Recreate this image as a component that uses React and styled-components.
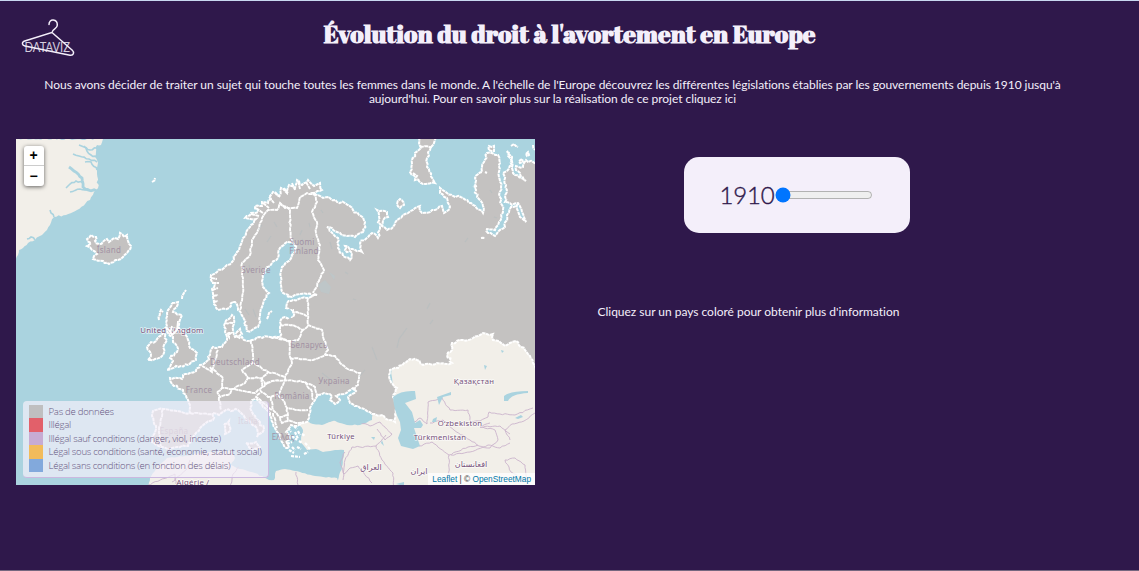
import React from "react";
import styled, { createGlobalStyle } from "styled-components";

const Global = createGlobalStyle`
  * { box-sizing: border-box; }
  body { margin: 0; background: #2f184b; font-family: Lato, "Liberation Sans", sans-serif; color: #f4effa; }
`;

const Page = styled.div`
  height: 571px;
  overflow: hidden;
  background: #2f184b;
  border-top: 1px solid #c8d8f0;
  border-bottom: 1px solid #75677f;
`;
const Header = styled.header`
  display: grid;
  grid-template-columns: 80px 1fr 80px;
  height: 64px;
`;
const Logo = styled.svg`
  width: 56px;
  height: 40px;
  margin: 17px 0 0 20px;
`;
const Title = styled.h1`
  margin: 16px 0 0;
  font: 700 24.8px/34px "Abril Fatface", "Liberation Serif", serif;
  text-align: center;
  white-space: nowrap;
`;
const Intro = styled.p`
  margin: 13px 34px 0 0;
  padding-top: 0;
  font-size: 12px;
  letter-spacing: -0.052px;
  line-height: 14.4px;
  text-align: center;
`;
const Main = styled.main`
  display: flex;
  margin: 32px 0 0 16px;
`;
const MapFrame = styled.section`
  position: relative;
  width: 519px;
  height: 346px;
  overflow: hidden;
  background: #aad3df;
`;
const MapSvg = styled.svg`
  display: block;
  width: 519px;
  height: 346px;
`;
const Zoom = styled.div`
  position: absolute;
  left: 7.5px;
  top: 7.5px;
  width: 20px;
  border-radius: 3px;
  background: #fff;
  box-shadow: 0 1px 4px rgba(0, 0, 0, 0.6);
`;
const ZoomButton = styled.button`
  display: block;
  width: 20px;
  height: 20px;
  padding: 0;
  border: 0;
  border-bottom: ${(p) => (p.$line ? "1px solid #ccc" : "0")};
  background: none;
  color: #000;
  font: 700 14px/19px "Liberation Sans", sans-serif;
`;
const Legend = styled.ul`
  position: absolute;
  left: 7px;
  top: 262px;
  width: 246px;
  height: 77px;
  margin: 0;
  padding: 4px 6px;
  list-style: none;
  border-radius: 4px;
  background: rgba(244, 239, 250, 0.7);
  border-right: 1px solid #cbb8e0;
  border-bottom: 1px solid #cbb8e0;
`;
const LegendRow = styled.li`
  display: flex;
  align-items: center;
  gap: 6px;
  height: 13.5px;
  font: 300 9.6px/13.5px "Open Sans", "Noto Sans", sans-serif;
  letter-spacing: -0.26px;
  color: #66557f;
  white-space: nowrap;
`;
const Swatch = styled.span`
  flex: none;
  width: 13.5px;
  height: 13.5px;
  background: ${(p) => p.$color};
`;
const Attribution = styled.div`
  position: absolute;
  right: 0;
  bottom: 0;
  height: 12px;
  padding: 0 4px;
  background: rgba(255, 255, 255, 0.75);
  color: #333;
  font: 8.3px/12px "Liberation Sans", sans-serif;
  white-space: nowrap;
`;
const Credit = styled.a`
  color: #0078a8;
`;
const Side = styled.section`
  flex: 1;
  display: flex;
  flex-direction: column;
`;
const YearCard = styled.div`
  display: flex;
  align-items: center;
  width: 225.5px;
  height: 75.5px;
  margin: 18.5px 0 0 149px;
  padding-left: 35.5px;
  border-radius: 15px;
  background: #f4effa;
  color: #2f184b;
`;
const Year = styled.span`
  width: 55px;
  font-size: 24px;
  line-height: 30px;
  letter-spacing: -0.2px;
  font-weight: 300;
  -webkit-text-stroke: 0.4px #2f184b;
`;
const Range = styled.input`
  width: 98px;
  height: 12px;
  margin: 0;
`;
const Hint = styled.p`
  margin: 72px 0 0 62.5px;
  font-size: 12px;
  letter-spacing: -0.02px;
  line-height: 14.4px;
`;

// Breaks straight segments into short irregular steps, so a coast or a border looks natural.
function rough(text, amp, seed = 7) {
  const pts = text.trim().split(/\s+/).map((p) => p.split(",").map(Number));
  let s = seed;
  const rnd = () => {
    s = (s * 16807) % 2147483647;
    return s / 2147483647 - 0.5;
  };
  rnd();
  const out = [pts[0]];
  for (let i = 1; i < pts.length; i++) {
    const [x0, y0] = pts[i - 1];
    const [x1, y1] = pts[i];
    const len = Math.hypot(x1 - x0, y1 - y0) || 1;
    const n = Math.max(1, Math.round(len / 2.6));
    for (let k = 1; k < n; k++) {
      const t = k / n;
      const d = rnd() * amp;
      out.push([x0 + (x1 - x0) * t - ((y1 - y0) / len) * d, y0 + (y1 - y0) * t + ((x1 - x0) / len) * d]);
    }
    out.push([x1, y1]);
  }
  return out.map((p) => p.map((v) => v.toFixed(1)).join(",")).join(" ");
}

const greenland = "10,139 103,139 101,145 97,145 96,152 97,160 97,174 98,188 94,192 90,200 77,210 66,215 54,217 50,225 47,230 42,235 35,240 28,243 23,248 19,250 16,262 10,262";
const fjords = [
  "97,148 90,150 84,147 79,145", "97,158 91,155 87,151 84,146", "97,162 89,159 79,156 73,154",
  "97,170 91,162 85,162", "97,191 88,190 83,187 82,178 74,171 69,167", "83,183 76,181 70,184 66,188",
  "90,190 80,189 70,192", "54,217 51,213 50,210", "35,240 31,237 27,239",
];
const mainland = `233,302 229,308 218,310 214,304 213,297 212,289 215,284 211,280 211,275 217,272 224,268 227,265 232,262 237,252 240,246 243,238 246,232
 250,227 256,219 245,218 251,213 258,212 255,206 262,206 262,202 268,203 273,192 279,196 281,188 287,193 289,185 295,188 297,180 302,185 308,180 314,186 320,183 322,190 313,193
 323,198 329,197 337,202 345,203 353,210 361,216 365,222 364,232 355,237 347,236 340,233 332,228 327,227 333,234 338,238 338,248 343,256 350,260 352,253
 345,250 345,246 355,250 362,252 360,243 372,233 378,238 380,227 377,210 387,212 388,217 383,220 382,226 387,230 393,227 397,220 405,214 413,210 420,206 422,213
 435,210 442,206 444,213 450,207 447,198 440,193 440,188 447,193 453,196 463,198 473,205 483,213 483,206 477,197 475,188 475,178 482,172 484,162 487,153
 498,155 500,163 499,177 501,187 500,197 503,210 499,222 495,230 487,229 488,233 495,236 505,227 507,215 511,207 517,205 520,217 526,222 522,212 518,203
 512,205 505,202 506,185 503,173 512,165 510,158 507,151 512,157 513,173 526,181 516,170 516,166 523,167 526,160 540,166
 540,375 533,363 525,350 516,341 510,343 505,346 499,341 493,340 493,334 483,333 473,338 463,340 452,343 452,350 447,355 452,363 446,364 437,363 423,365 417,360 410,359 404,363 398,368 390,370 390,380 397,388
 393,397 397,404 395,422 389,420 383,415 372,414 360,408 350,403 348,397 356,391 353,388 344,394 336,396 340,400 335,404 330,400 332,396 324,393 318,395 315,400 310,408
 309,415 307,422 297,426 291,425 286,432 290,438 286,441 289,448 284,446 278,433 273,423 270,413 263,407 258,400 252,400 250,408 258,420 264,429 257,437 257,428 245,418 238,410 226,410 219,415
 213,413 213,420 202,426 193,437 188,446 177,447 170,450 162,447 152,442 156,426 152,416 153,411 163,409 190,413 188,400 183,390 172,384
 170,378 182,379 183,375 190,373 196,371 200,365 207,361 210,355 213,347 222,347 227,340 225,332 225,323 232,315 234,319 233,330 235,337 242,337 247,341 252,340 260,337 270,337 280,337
 280,327 282,318 293,317 293,310 286,308 287,303 293,300 307,298 317,295 300,294 292,297 283,293 281,277 282,267 289,261 292,255 297,247 292,242 287,242 280,248 278,258
 270,266 265,270 263,278 263,287 269,293 264,300 262,307 260,316 258,327 252,330 247,331 243,317 238,310 235,302 233,302`;
const islands = [
  "172,303 178,302 173,312 182,315 178,327 185,333 187,337 190,348 197,353 196,360 188,365 176,366 167,370 173,361 170,358 177,352 177,346 173,342 173,337 168,333 166,323 167,313 172,303",
  "148,360 151,354 147,347 151,342 156,341 163,333 167,340 164,345 163,355 155,359 148,360",
  "92,250 87,246 91,243 87,239 91,235 96,237 95,241 99,244 107,239 109,242 115,238 118,239 120,233 124,237 127,235 128,241 131,246 127,253 118,260 109,264 103,261 93,259 97,254 92,250",
  "419,136 437,136 434,143 430,150 427,158 427,167 435,183 423,184 418,179 410,172 412,164 415,153 421,148 419,143 419,136",
  "397,204 400,199 404,205 400,208 397,204", "489,150 489,146 494,146 494,151 489,150",
  "519,161 522,159 523,162 520,163 519,161", "526,154 528,152 529,155 527,156 526,154",
  "511,146 514,144 518,147", "533,145 535,150", "152,182 155,178", "159,320 161,310 163,312", "182,299 184,293 186,290",
  "227,334 231,333 229,337 227,334", "236,333 240,329 242,334 238,337 236,333", "267,319 269,313 272,311",
  "287,296 289,297", "246,443 256,442 260,447 253,450 246,443", "224,424 229,421 230,431 225,434 224,424", "485,172 487,173", "477,186 473,186",
  "481,238 485,238", "413,173 417,176 415,180 419,180",
];
const borders = [
  "240,310 243,293 242,263 250,255 252,240 258,230 262,218 268,210 277,210 280,203 290,210 290,230 292,242",
  "280,203 285,208 297,208 300,197 307,193 315,195 317,202 312,212 317,222 316,233 320,245 318,260 324,270 319,281 313,293",
  "308,298 308,307 308,325 322,330 324,340 328,350 325,355", "287,315 297,312 308,316", "280,325 293,325 303,330 308,326",
  "303,330 298,340 290,342 280,338", "270,337 290,341 290,357 292,363 285,377", "290,358 313,360 325,355 335,356 340,363 350,370 360,373 358,385 353,390",
  "251,340 253,353 253,363 242,370 248,378 262,378 268,372 253,363", "268,372 277,374 285,377 285,381",
  "262,378 265,384 272,381 285,380", "232,389 245,383 248,378", "262,378 262,387 255,393 247,392 232,389", "262,387 270,382",
  "260,390 268,397 278,395 285,380 305,382 312,392 313,400", "278,395 283,400 287,408 298,410 308,410", "305,382 315,387 317,397",
  "287,408 288,420 296,423 304,422", "271,397 273,410 280,417 287,415", "273,413 277,428", "280,417 282,423 289,421", "260,393 256,397 272,410",
  "210,367 223,378 222,388", "217,392 222,388 232,389 230,394 220,397 217,392", "219,397 221,410", "218,350 215,360 212,372 202,366",
  "225,323 233,323", "163,409 159,430 161,446", "190,413 213,414", "420,146 432,147",
];
const asiaBorders = [
  "360,422 370,426 380,422 392,434 385,440 377,429", "360,447 352,447 345,460 343,480", "360,447 376,446 386,435", "376,446 382,460 393,473 394,490",
  "345,452 340,462 344,474 350,468 358,466 372,483", "414,422 420,418 427,424 428,402 442,398 450,410 468,410 471,422 480,421 488,417 489,412 500,414 515,415 533,408",
  "419,446 432,442 449,455 468,447 478,445", "430,423 443,420 454,430 470,440 479,446 490,448 498,440 495,430 480,427 490,423",
  "449,455 449,475 455,490", "451,455 470,452 488,445 500,448 510,443", "510,440 505,430 512,424 524,421 535,413", "505,460 515,458 525,465 527,480",
  "505,460 511,472 525,480", "480,427 500,426 510,434", "148,485 175,474 176,484", "239,467 233,474 230,490", "296,472 298,485", "172,482 186,470 190,460",
];
const lakes = [
  "M393 397Q401 390 415 391L416 399 405 403 412 412 415 423 420 420 423 425 421 428 414 428 420 446 413 449 401 446 398 438 401 430 400 422Q394 411 393 397Z",
  "M504 396Q510 391 528 391L528 393Q511 394 508 401L504 401Z", "M515 418L521 415 523 417 518 419Z", "M437 397L451 392 451 395 443 397 439 405Z",
  "M433 419L437 417 436 422 432 422Z", "M484 365L487 366 485 370Z", "M318 285L325 280 331 287 329 294 321 292Z", "M329 272L335 276 334 280Z",
  "M286 310L290 309 293 314 290 319 285 314Z", "M371 437L375 437 374 440Z", "M382 440L384 446 381 443Z", "M396 484L404 482 404 486Z", "M501 350L504 351 502 353Z",
  "M327 457L333 455 336 455 334 458 329 460Z",
];
const places = [
  ["Ísland", 109, 253, 8, 1], ["Sverige", 256, 273, 8, 1], ["Suomi", 302, 245, 8, 1], ["Finland", 304, 254, 8, 1], ["United Kingdom", 172, 333, 7.8, 0],
  ["Беларусь", 309, 348, 8, 1], ["Deutschland", 235, 365, 8, 1], ["Україна", 334, 384, 8, 1], ["France", 199, 393, 8, 1], ["România", 292, 399, 8, 1],
  ["Türkiye", 341, 439, 7.6, 0], ["Қазақстан", 474, 384, 7.7, 0], ["Oʻzbekiston", 460, 426, 7.7, 0], ["Türkmenistan", 440, 440, 7.7, 0],
  ["العراق", 371, 470, 8, 0], ["ایران", 419, 474, 8, 0], ["افغانستان", 471, 467, 8, 0], ["España", 174, 434, 8, 1], ["Italia", 248, 424, 8, 1],
  ["Algérie /", 193, 484.5, 7.8, 0], ["Ελλάς", 283, 440, 8, 1],
];
const legend = [
  ["#bfbfc0", "Pas de données"], ["#e2606a", "Illégal"], ["#c7abd3", "Illégal sauf conditions (danger, viol, inceste)"],
  ["#f2bb5b", "Légal sous conditions (santé, économie, statut social)"], ["#82a9dc", "Légal sans conditions (en fonction des délais)"],
];

function EuropeMap() {
  return (
    <MapSvg viewBox="16 139 519 346">
      <g fill="#f2efe9">
        <polygon points={rough(greenland, 2.2)} />
        <polygon points={rough("298,423 306,421 313,424 322,425 333,420 340,423 347,425 360,425 372,420 372,405 395,405 390,360 450,330 540,330 540,490 337,490 338,480 342,467 344,450 335,450 323,452 316,449 307,450 300,442 303,430 298,423", 1)} />
        <polygon points={rough("148,490 150,478 157,467 167,458 185,456 205,452 232,451 235,458 231,465 240,469 255,473 269,480 274,480 276,471 285,469 300,472 315,476 337,478 342,490 148,490", 1.2)} />
      </g>
      <g fill="none" stroke="#aad3df">
        {fjords.map((p) => <polyline key={p} points={rough(p, 2)} strokeWidth={p.startsWith("97,191") ? 2.8 : 1.6} />)}
      </g>
      <g fill="none" stroke="#cbb3cc" strokeWidth=".9">
        {asiaBorders.map((p) => <polyline key={p} points={rough(p, 1.5)} />)}
      </g>
      <path d="M316 400L325 392 343 391 354 391 350 402Q367 409 369 417 367 425 357 423 347 427 336 420 320 426 310 422Z" fill="#aad3df" />
      <g fill="#c4c2c1" stroke="#fff" strokeWidth="2" strokeDasharray="3.4 .6">
        <polygon points={rough(mainland, 2.4)} />
        {islands.map((p, i) => <polyline key={p} points={rough(p, 2.4, i + 20)} />)}
      </g>
      <g fill="none" stroke="#fff" strokeWidth="1.9" strokeDasharray="4 .5">
        {borders.map((p) => <polyline key={p} points={rough(p, 1.5)} />)}
        <path d="M211 278l6 1M212 283l7 0M212 290l6 -2M213 296l5-1M213 302l5-1M251 214l8 2M256 208l7 5M263 203l6 5M269 197l5 6M275 192l5 5M284 188l4 5M292 183l3 7M298 181l2 8M306 182l4 7" />
        <path d="M288 428l3 4M294 426l3 3M292 436l5 4M298 431l2 4M302 434l3 2M299 441l3 2M305 443l3 3M292 447l3 3M297 447l4 2M291 456l9 1M304 454l4-2M308 447l2 2M295 432l3 7M287 444l5-2M289 450l5 3" strokeWidth="2.2" strokeDasharray="3 1" />
      </g>
      <g fill="#aad3df">{lakes.map((d) => <path key={d} d={d} opacity={d.startsWith("M318") || d.startsWith("M329") ? 0.25 : 1} />)}</g>
      <g stroke="#aab9bf" strokeWidth="1.1" opacity=".35" fill="none">
        <path d="M321 210l2 3M309 223l1 4M302 239l2 5M345 272l3 2M353 299l3 1M262 225l-4 5M271 236l-4 6M249 265l2 6M274 222l3 5M430 303l-3 6M468 238l-3 4M407 328l-8 11-2 9M490 190l2 3M494 217l3 1M372 347l5 13M433 320l-3 4M365 370l-6 7M322 373l9 7M302 230l-2 5M330 242l2 7M253 309l3 8M245 309l4 6" />
      </g>
      <g fontFamily='"Noto Sans", "DejaVu Sans", sans-serif' textAnchor="middle">
        {places.map(([t, x, y, size, dim]) => (
          <text key={t} x={x} y={y} fontSize={size} fill={dim ? "#9d8a9f" : "#76517b"} opacity={dim ? 0.85 : 1}
            stroke={dim ? "none" : "#fff"} strokeOpacity=".65" strokeWidth="1.5" paintOrder="stroke"
            letterSpacing={/[\u0600-\u06ff]/.test(t) ? 0 : 0.25}>{t}</text>
        ))}
      </g>
      <path d="M165 327l4 3 3 5 5-5 1-9M172 326l-2 8" fill="none" stroke="#fff" strokeWidth="1.8" />
    </MapSvg>
  );
}

export default function App() {
  return (
    <>
      <Global />
      <Page>
        <Header>
          <Logo viewBox="20 18 56 40">
            <path d="M49 24.5C49 18 57.5 19 57.3 25.2 57.2 29 52.5 28.6 52 32.5L24 41.3C21.5 42.5 22 45.4 25 46L70 55.2C73.5 55.8 74.7 52.5 72.3 50.3L52 32.5" fill="none" stroke="#f4effa" strokeWidth="1.5" strokeLinecap="round" />
            <text x="24.5" y="51.5" textLength="45.5" lengthAdjust="spacingAndGlyphs" fontFamily="Lato, sans-serif" fontSize="12.5" fill="#f4effa" fillOpacity=".85">DATAVIZ</text>
          </Logo>
          <Title>Évolution du droit à l'avortement en Europe</Title>
        </Header>
        <Intro>
          Nous avons décider de traiter un sujet qui touche toutes les femmes dans le monde. A l'échelle de l'Europe découvrez les différentes législations établies par les gouvernements depuis 1910 jusqu'à<br />
          aujourd'hui. Pour en savoir plus sur la réalisation de ce projet cliquez ici
        </Intro>
        <Main>
          <MapFrame>
            <EuropeMap />
            <Zoom>
              <ZoomButton $line>+</ZoomButton>
              <ZoomButton>−</ZoomButton>
            </Zoom>
            <Legend>
              {legend.map(([color, label]) => (
                <LegendRow key={label}><Swatch $color={color} />{label}</LegendRow>
              ))}
            </Legend>
            <Attribution><Credit>Leaflet</Credit> | © <Credit>OpenStreetMap</Credit></Attribution>
          </MapFrame>
          <Side>
            <YearCard>
              <Year>1910</Year>
              <Range type="range" min="1910" max="2020" defaultValue="1910" />
            </YearCard>
            <Hint>Cliquez sur un pays coloré pour obtenir plus d'information</Hint>
          </Side>
        </Main>
      </Page>
    </>
  );
}
